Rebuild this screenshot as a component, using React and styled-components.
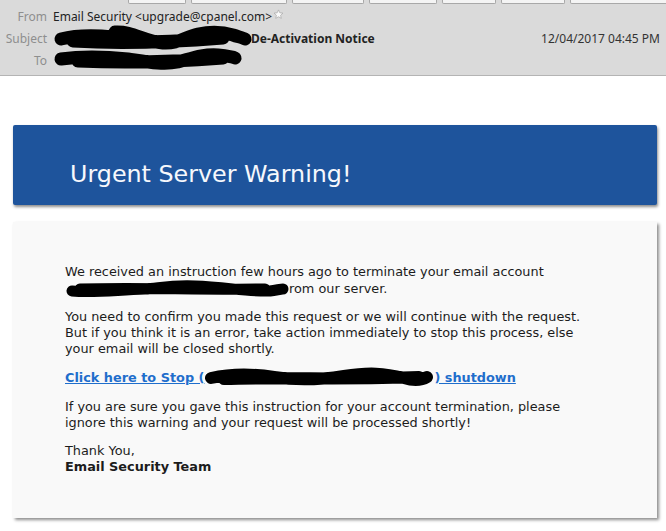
import React from 'react';
import styled, { createGlobalStyle } from 'styled-components';

const GlobalStyle = createGlobalStyle`
  html, body {
    margin: 0;
    padding: 0;
    background: #ffffff;
  }
  body {
    font-family: 'DejaVu Sans', sans-serif;
    width: 666px;
    height: 531px;
    overflow: hidden;
  }
`;

const HeaderPane = styled.header`
  height: 75px;
  background: #dadada;
  border-bottom: 1px solid #b4b4b4;
  font-family: 'Noto Sans', 'Open Sans', sans-serif;
  font-size: 12px;
  color: #222;
  display: flex;
  flex-direction: column;
`;

const Toolbar = styled.div`
  height: 4px;
  display: flex;
  gap: 5px;
  padding-left: 128px;
  overflow: hidden;
`;

const ToolButton = styled.div`
  width: ${(props) => props.$w}px;
  height: 4px;
  flex-shrink: 0;
  background: #f4f4f4;
  border: 1px solid #a8a8a8;
  border-top: none;
  border-radius: 0 0 2px 2px;
  box-sizing: border-box;
`;

const FieldRow = styled.div`
  display: flex;
  align-items: center;
  height: 22px;
  padding-right: 6px;
  margin-top: ${(props) => props.$top || 0}px;
`;

const FieldLabel = styled.span`
  width: 47px;
  text-align: right;
  color: #8e8e8e;
  flex-shrink: 0;
  margin-right: 6px;
`;

const FieldValue = styled.span`
  display: flex;
  align-items: center;
  white-space: nowrap;
  height: 22px;
`;

const SubjectText = styled.span`
  font-weight: bold;
  margin-left: -2px;
`;

const DateText = styled.span`
  margin-left: auto;
  color: #333;
`;

const StarIcon = styled.svg`
  margin-left: 1px;
  margin-top: -4px;
`;

const Scribble = styled.svg`
  display: block;
  flex-shrink: 0;
  overflow: visible;
  margin: ${(props) => props.$bleed || 0}px 0;
`;

const Body = styled.main`
  padding: 49px 9px 0 13px;
  display: flex;
  flex-direction: column;
  gap: 17px;
`;

const Banner = styled.div`
  height: 80px;
  background: #1e549c;
  border-radius: 2px;
  box-shadow: 1px 2px 3px rgba(0, 0, 0, 0.45);
  display: flex;
  align-items: center;
  padding-left: 57px;
  padding-top: 18px;
  box-sizing: border-box;
  color: #f6f8fc;
  font-size: 23.8px;
`;

const Card = styled.div`
  height: 296px;
  background: #f9f9f9;
  box-shadow: 2px 2px 3px rgba(0, 0, 0, 0.45);
  padding: 42px 20px 0 52px;
  box-sizing: border-box;
  font-size: 12.85px;
  line-height: 16px;
  color: #1c1c1c;
`;

const Para = styled.p`
  margin: 0 0 ${(props) => props.$gap || 11}px 0;
`;

const InlineRedact = styled.span`
  display: inline-flex;
  vertical-align: middle;
`;

const StopLink = styled.a`
  color: #1f6ecc;
  font-weight: bold;
  text-decoration: underline;
  display: inline-flex;
  align-items: center;
  white-space: nowrap;
`;

const Signature = styled.strong`
  font-weight: bold;
`;

function Redaction({ width, height, path, stroke = 12, bleed }) {
  return (
    <Scribble width={width} height={height} viewBox={`0 0 ${width} ${height}`} $bleed={bleed}>
      <path
        d={path}
        fill="none"
        stroke="#000"
        strokeWidth={stroke}
        strokeLinecap="round"
        strokeLinejoin="round"
      />
    </Scribble>
  );
}

const toolWidths = [58, 96, 72, 68, 54, 64, 98];

export default function App() {
  return (
    <>
      <GlobalStyle />
      <HeaderPane>
        <Toolbar>
          {toolWidths.map((w, i) => (
            <ToolButton key={i} $w={w} />
          ))}
        </Toolbar>
        <FieldRow $top={1}>
          <FieldLabel>From</FieldLabel>
          <FieldValue>
            Email Security &lt;upgrade@cpanel.com&gt;
            <StarIcon width="11" height="11" viewBox="0 0 24 24">
              <path
                d="M12 2l2.9 6.3 6.9.7-5.2 4.6 1.5 6.8L12 17l-6.1 3.4 1.5-6.8L2.2 9l6.9-.7z"
                fill="#fafafa"
                stroke="#aaa"
                strokeWidth="1.6"
              />
            </StarIcon>
          </FieldValue>
        </FieldRow>
        <FieldRow>
          <FieldLabel>Subject</FieldLabel>
          <FieldValue>
            <Redaction
              width={200}
              height={30}
              bleed={-4}
              stroke={13}
              path="M8 16 C20 13 40 12 60 14 M62 9 C80 8 90 18 110 20 C125 21 132 14 145 11 C160 8 170 9 180 12 C186 14 190 15 192 16 M20 18 C70 21 120 19 170 15"
            />
            <SubjectText>De-Activation Notice</SubjectText>
          </FieldValue>
          <DateText>12/04/2017 04:45 PM</DateText>
        </FieldRow>
        <FieldRow>
          <FieldLabel>To</FieldLabel>
          <FieldValue>
            <Redaction
              width={190}
              height={30}
              bleed={-4}
              stroke={13}
              path="M8 14 C30 11 55 12 75 14 C95 17 110 20 125 17 C140 13 150 9 165 10 C175 11 180 12 182 13 M25 16 C70 18 120 17 170 13"
            />
          </FieldValue>
        </FieldRow>
      </HeaderPane>
      <Body>
        <Banner>Urgent Server Warning!</Banner>
        <Card>
          <Para>
            We received an instruction few hours ago to terminate your email account
            <br />
            <InlineRedact>
              <Redaction
                width={224}
                height={18}
                stroke={11}
                path="M7 11 C30 13 50 10 80 9 C95 8 105 5 130 6 C160 7 185 12 205 11 C212 10 216 9 218 9 M15 9 C70 7 130 10 200 9"
              />
            </InlineRedact>
            rom our server.
          </Para>
          <Para>
            You need to confirm you made this request or we will continue with the request.
            <br />
            But if you think it is an error, take action immediately to stop this process, else
            <br />
            your email will be closed shortly.
          </Para>
          <Para $gap={12}>
            <StopLink href="#">
              Click here to Stop (
              <Redaction
                width={230}
                height={19}
                stroke={12}
                path="M7 10 C25 6 45 5 70 9 C95 13 115 12 140 8 C165 4 180 5 200 10 C210 13 218 12 223 9 M20 11 C80 9 150 12 215 9"
              />
              ) shutdown
            </StopLink>
          </Para>
          <Para $gap={12}>
            If you are sure you gave this instruction for your account termination, please
            <br />
            ignore this warning and your request will be processed shortly!
          </Para>
          <Para>
            Thank You,
            <br />
            <Signature>Email Security Team</Signature>
          </Para>
        </Card>
      </Body>
    </>
  );
}
